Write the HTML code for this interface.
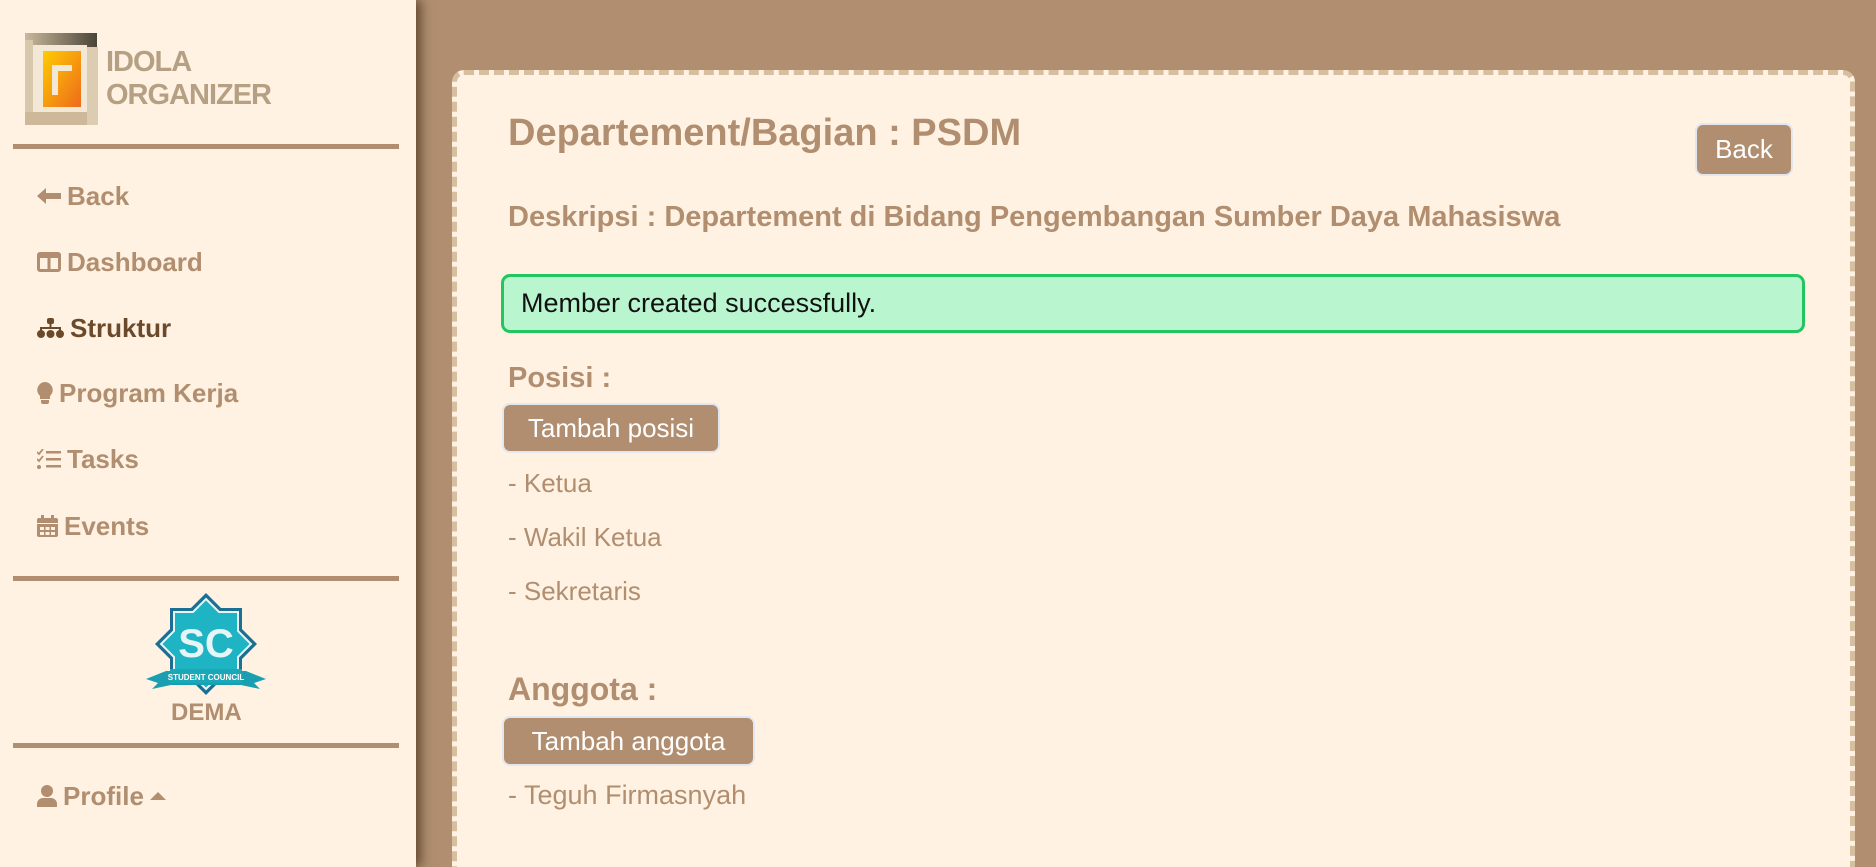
<!DOCTYPE html>
<html><head><meta charset="utf-8">
<style>
*{margin:0;padding:0;box-sizing:border-box}
html{width:1876px;height:867px;overflow:hidden}
body{width:1876px;height:867px;overflow:hidden;background:#b08e6f;font-family:"Liberation Sans",sans-serif;position:relative}
.sb{position:absolute;left:0;top:0;width:416px;height:867px;background:#fff2e2;box-shadow:5px 0 10px rgba(60,40,20,.65);z-index:2}
.hr{position:absolute;left:13px;width:386px;height:5px;background:#b08e6f}
.nav{position:absolute;left:37px;font-weight:bold;font-size:26px;color:#b08e6f;display:flex;align-items:center;gap:6px;height:32px}
.nav svg{fill:#b08e6f}
.card{position:absolute;left:452px;top:70px;width:1403px;height:810px;background:#fff2e2;border:5px dashed #d6bf9f;border-radius:12px}
.t{position:absolute;color:#b08e6f;white-space:nowrap}
.btn{position:absolute;background:#b08e6f;color:#fff;border:2px solid #e2e6ee;border-radius:8px;font-size:26px;display:flex;align-items:center;justify-content:center}
</style></head><body>
<div class="sb">
  <svg style="position:absolute;left:25px;top:33px" width="74" height="92" viewBox="0 0 74 92">
    <defs>
      <linearGradient id="g1" x1="0" x2="1"><stop offset="0" stop-color="#c9b89c"/><stop offset="1" stop-color="#4a4538"/></linearGradient>
      <linearGradient id="g2" x1="0" y1="0" x2="1" y2="1"><stop offset="0" stop-color="#ffcc00"/><stop offset="1" stop-color="#ee6a1c"/></linearGradient>
    </defs>
    <rect x="0" y="0" width="72" height="92" fill="url(#g1)"/>
    <rect x="0" y="7" width="8" height="85" fill="#d8c7aa"/>
    <rect x="0" y="79" width="73" height="13" fill="#cdb89a"/>
    <rect x="62" y="14" width="11" height="78" fill="#dccdb2"/>
    <rect x="8" y="12" width="54" height="67" fill="#f3e8d6"/>
    <rect x="18" y="18" width="38" height="56" fill="url(#g2)"/>
    <rect x="27" y="32" width="20" height="6" fill="#f3e8d6"/>
    <rect x="27" y="38" width="6" height="24" fill="#f3e8d6"/>
  </svg>
  <div class="t" style="left:106px;top:46px;font-size:29px;line-height:33px;color:#b5a084;font-weight:bold;letter-spacing:-1px">IDOLA<br>ORGANIZER</div>
  <div class="hr" style="top:144px"></div>
  <div class="nav" style="top:180px"><svg width="24" height="16" viewBox="0 0 24 16"><path d="M0 8 L9 0 V5 H24 V11 H9 V16 Z"/></svg>Back</div>
  <div class="nav" style="top:246px"><svg width="24" height="20" viewBox="0 0 24 20"><path d="M3 0h18a3 3 0 0 1 3 3v14a3 3 0 0 1-3 3H3a3 3 0 0 1-3-3V3a3 3 0 0 1 3-3zM3 6v11h7.5V6zm10.5 0v11H21V6z" fill-rule="evenodd"/></svg>Dashboard</div>
  <div class="nav" style="top:312px;color:#6b4a2b"><svg width="27" height="20" viewBox="0 0 27 20" style="fill:#6b4a2b"><rect x="10" y="0" width="7" height="6" rx="2"/><rect x="12.5" y="6" width="2" height="4"/><rect x="3" y="9" width="21" height="2"/><rect x="3" y="9" width="2" height="4"/><rect x="22" y="9" width="2" height="4"/><circle cx="4" cy="16" r="4"/><circle cx="13.5" cy="16" r="4"/><circle cx="23" cy="16" r="4"/></svg>Struktur</div>
  <div class="nav" style="top:377px"><svg width="16" height="22" viewBox="0 0 16 22"><path d="M8 0a8 8 0 0 0-5 14v3h10v-3A8 8 0 0 0 8 0zM4 18h8v2a2 2 0 0 1-2 2H6a2 2 0 0 1-2-2z"/></svg>Program Kerja</div>
  <div class="nav" style="top:443px"><svg width="24" height="20" viewBox="0 0 24 20"><path d="M0 3l2 2 4-5" stroke="#b08e6f" stroke-width="1.8" fill="none"/><path d="M0 10l2 2 4-5" stroke="#b08e6f" stroke-width="1.8" fill="none"/><circle cx="2" cy="18" r="2"/><rect x="9" y="2" width="15" height="2.5"/><rect x="9" y="9" width="15" height="2.5"/><rect x="9" y="16" width="15" height="2.5"/></svg>Tasks</div>
  <div class="nav" style="top:510px"><svg width="21" height="22" viewBox="0 0 21 22"><path d="M4 0h3v3h7V0h3v3h2a2 2 0 0 1 2 2v3H0V5a2 2 0 0 1 2-2h2zM0 9h21v11a2 2 0 0 1-2 2H2a2 2 0 0 1-2-2zm3 3v3h4v-3zm5.5 0v3h4v-3zm5.5 0v3h4v-3zM3 17v3h4v-3zm5.5 0v3h4v-3zm5.5 0v3h4v-3z" fill-rule="evenodd"/></svg>Events</div>
  <div class="hr" style="top:576px"></div>
  <svg style="position:absolute;left:146px;top:593px" width="120" height="103" viewBox="0 0 120 103">
    <polygon points="60,0 75,15 96,15 96,36 111,51 96,66 96,87 75,87 60,102 45,87 24,87 24,66 9,51 24,36 24,15 45,15" fill="#1b6f93"/>
    <polygon points="60,6 73,19 92,19 92,38 105,51 92,64 92,83 73,83 60,96 47,83 28,83 28,64 15,51 28,38 28,19 47,19" fill="#1fb4c4" stroke="#e6f6f6" stroke-width="2"/>
    <text x="60" y="64" font-size="40" font-weight="bold" text-anchor="middle" fill="#e6f6f6" font-family="Liberation Sans">SC</text>
    <path d="M0 86 L20 78 L100 78 L120 86 L108 90 L114 96 L95 92 L25 92 L6 96 L12 90 Z" fill="#1a9fb0"/>
    <rect x="24" y="76" width="72" height="14" fill="#1aa7b7"/>
    <text x="60" y="87" font-size="8" text-anchor="middle" fill="#fff" font-family="Liberation Sans" font-weight="bold">STUDENT COUNCIL</text>
  </svg>
  <div class="t" style="left:171px;top:699px;font-size:24px;font-weight:bold">DEMA</div>
  <div class="hr" style="top:743px"></div>
  <div class="nav" style="top:780px"><svg width="20" height="22" viewBox="0 0 20 22"><circle cx="10" cy="6" r="6"/><path d="M0 22v-3a6 6 0 0 1 6-6h8a6 6 0 0 1 6 6v3z"/></svg>Profile<svg width="16" height="10" viewBox="0 0 16 10"><path d="M0 9L8 1l8 8z"/></svg></div>
</div>
<div class="card"></div>
<div class="t" style="left:508px;top:112px;font-size:38px;font-weight:bold">Departement/Bagian : PSDM</div>
<div class="btn" style="left:1695px;top:123px;width:98px;height:53px">Back</div>
<div class="t" style="left:508px;top:201px;font-size:29px;font-weight:bold">Deskripsi : Departement di Bidang Pengembangan Sumber Daya Mahasiswa</div>
<div style="position:absolute;left:501px;top:274px;width:1304px;height:59px;background:#b9f6d0;border:3px solid #22c55e;border-radius:9px;font-size:27px;color:#111;padding-left:17px;line-height:53px">Member created successfully.</div>
<div class="t" style="left:508px;top:362px;font-size:29px;font-weight:bold">Posisi :</div>
<div class="btn" style="left:502px;top:403px;width:218px;height:50px">Tambah posisi</div>
<div class="t" style="left:508px;top:468px;font-size:26px">- Ketua</div>
<div class="t" style="left:508px;top:522px;font-size:26px">- Wakil Ketua</div>
<div class="t" style="left:508px;top:576px;font-size:26px">- Sekretaris</div>
<div class="t" style="left:508px;top:671px;font-size:32px;font-weight:bold">Anggota :</div>
<div class="btn" style="left:502px;top:716px;width:253px;height:50px">Tambah anggota</div>
<div class="t" style="left:508px;top:780px;font-size:27px">- Teguh Firmasnyah</div>
</body></html>
